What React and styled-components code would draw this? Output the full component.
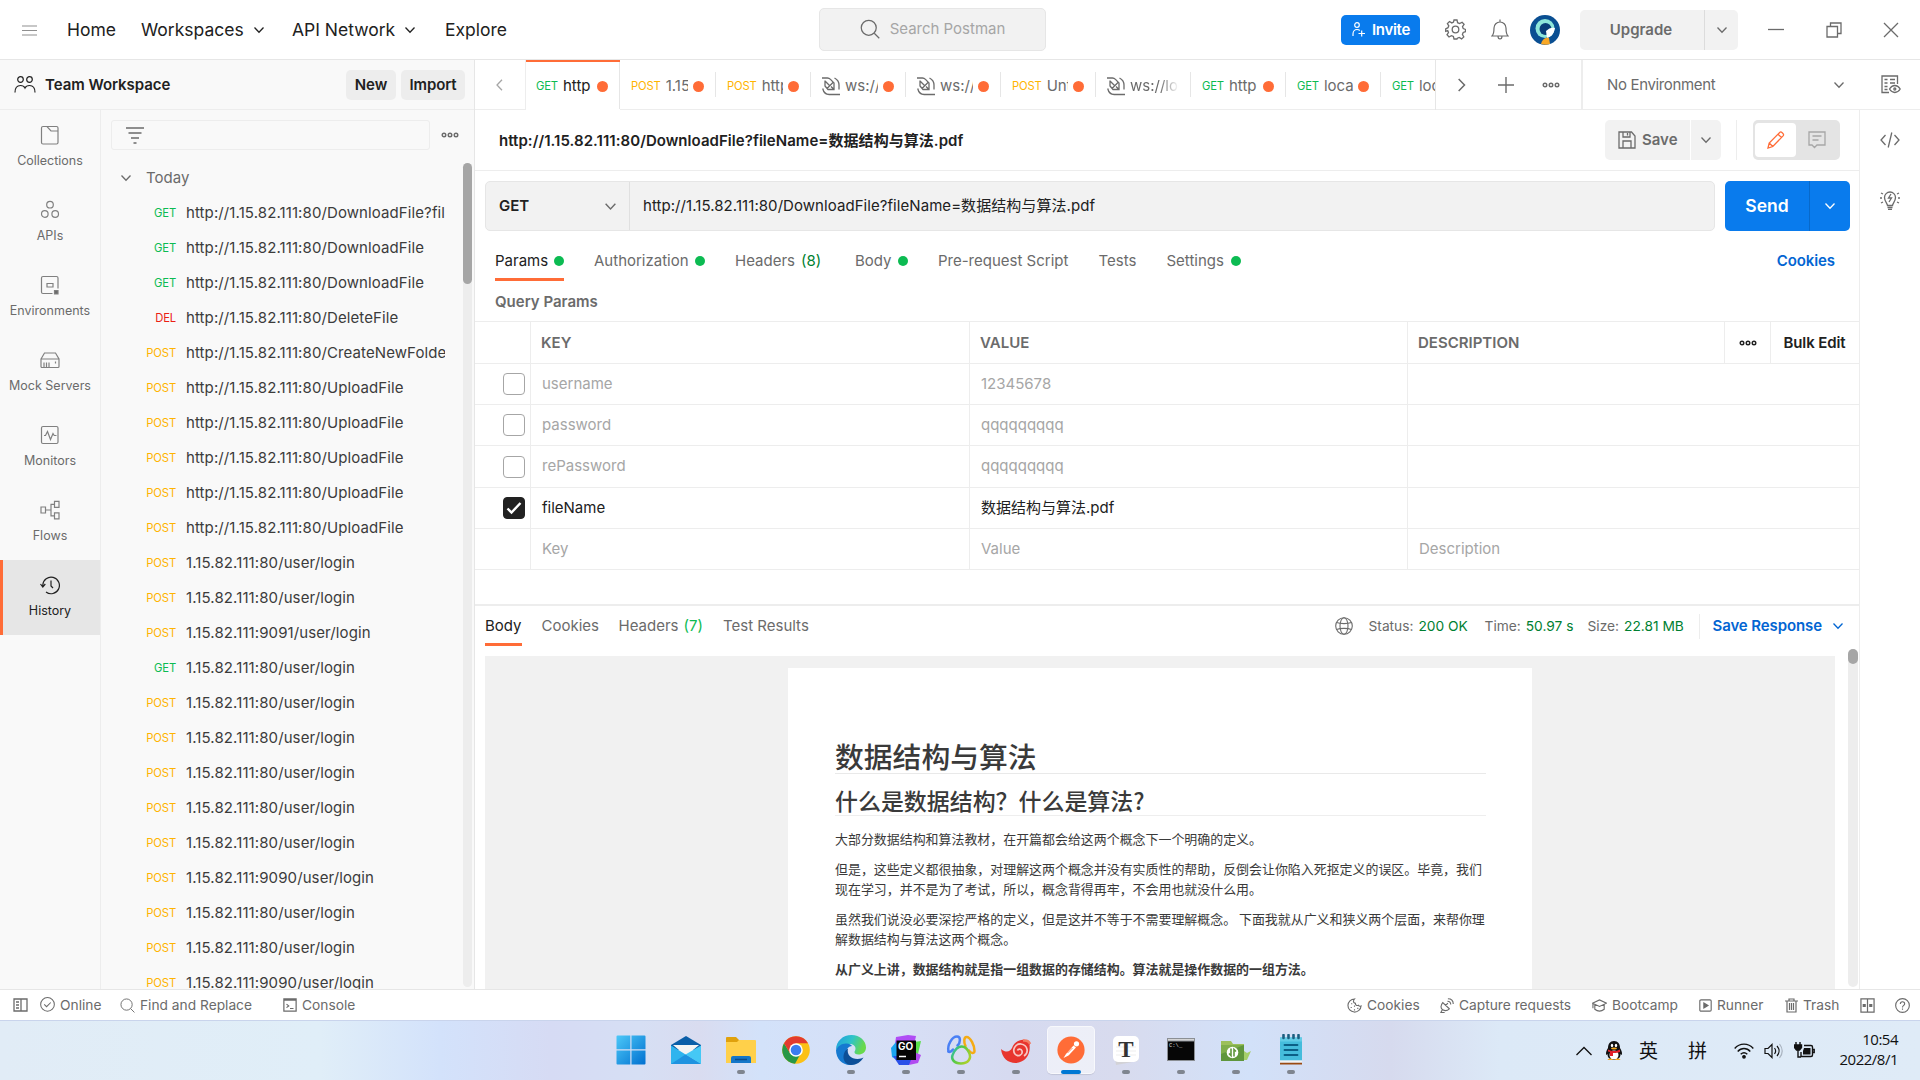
import React from "react";
import styled, { createGlobalStyle, css } from "styled-components";

const C = {
  text: "#212121",
  mid: "#6b6b6b",
  light: "#a6a6a6",
  line: "#ededed",
  panel: "#f9f9f9",
  fill: "#f2f2f2",
  orange: "#ff6c37",
  blue: "#097bed",
  link: "#0265d2",
  green: "#0cbb52",
  darkGreen: "#007f31",
  yellow: "#ffb400",
  red: "#eb2013",
};

const Global = createGlobalStyle`
  * { box-sizing: border-box; }
  html, body { margin: 0; padding: 0; background: #fff; overflow: hidden; }
  body {
    font-family: Inter, "Noto Sans CJK SC", sans-serif;
    font-size: 15px;
    line-height: 20px;
    color: ${C.text};
  }
  svg { display: block; flex: none; }
`;

const Screen = styled.div`
  width: 1920px;
  height: 1080px;
  display: flex;
  flex-direction: column;
  overflow: hidden;
  white-space: nowrap;
`;

const Svg = styled.svg.attrs((p) => ({
  width: p.$w || 16,
  height: p.$h || p.$w || 16,
  viewBox: p.$box || "0 0 16 16",
}))`
  fill: none;
  stroke: ${(p) => p.$c || C.mid};
  stroke-width: ${(p) => p.$s || 1.1};
`;

const Label = styled.span`
  letter-spacing: ${(p) => p.$ls || 0}px;
`;

/* ---------- small icons ---------- */
const Chevron = ({ c, dir = "down", w = 12 }) => {
  const d = {
    down: "M1.5 3.5 6 8.3 10.5 3.5",
    left: "M8 .8 3 6l5 5.2",
    right: "M4 .8 9 6l-5 5.2",
  }[dir];
  return (
    <Svg $w={w} $box="0 0 12 12" $c={c} $s={1.3}>
      <path d={d} />
    </Svg>
  );
};

const Dots = ({ c }) => (
  <Svg $w={18} $h={8} $box="0 0 18 8" $c={c} $s={1.4}>
    <circle cx="3" cy="4" r="1.8" />
    <circle cx="9" cy="4" r="1.8" />
    <circle cx="15" cy="4" r="1.8" />
  </Svg>
);

const SearchIcon = ({ w = 16 }) => (
  <Svg $w={w} $s={1}>
    <circle cx="7" cy="7" r="6" />
    <path d="m11.4 11.4 4 4" />
  </Svg>
);

const SocketIcon = () => (
  <Svg $w={18} $h={19} $box="0 0 18 19" $s={1.3}>
    <path d="M0 1h5.500c1.300 0 2 .4 3 1.400L12 6v6.500H6L3 9V3.500M3 4l4.500 4.500M12 12.500 9 9.500M5 11.500l6-6M12.500 1c3 1.500 4.500 4 4.500 7v4.500M.7 11.500c.8 3.500 3 6 6.500 6H18" />
  </Svg>
);

/* ---------- top bar ---------- */
const TopBar = styled.header`
  height: 60px;
  flex: none;
  display: grid;
  grid-template-columns: 819px 227px 1fr;
  align-items: center;
  border-bottom: 1px solid #e6e6e6;
`;

const NavBar = styled.nav`
  display: flex;
  align-items: center;
  padding-left: 22px;
  font-size: 17.5px;
`;

const MenuSlot = styled.div`
  width: 45px;
`;

const NavItem = styled.div`
  width: ${(p) => p.$w}px;
  display: flex;
  align-items: center;
  gap: 9px;
`;

const SearchBox = styled.div`
  height: 43px;
  display: flex;
  align-items: center;
  justify-content: center;
  gap: 10px;
  padding-bottom: 1px;
  background: ${C.fill};
  border: 1px solid #e6e6e6;
  border-radius: 5px;
  color: ${C.light};
`;

const TopRight = styled.div`
  display: flex;
  align-items: center;
  padding-left: 295px;
`;

const Invite = styled.div`
  width: 79px;
  height: 30px;
  display: flex;
  align-items: center;
  gap: 7px;
  padding-left: 11px;
  background: ${C.blue};
  border-radius: 5px;
  color: #fff;
  font-weight: 600;
  font-size: 15px;
`;

const Slot = styled.div`
  width: ${(p) => p.$w}px;
  display: flex;
  align-items: center;
  justify-content: ${(p) => p.$at || "center"};
`;

const UpgradeGroup = styled.div`
  display: flex;
  height: 40px;
  width: 158px;
  background: ${C.fill};
  border-radius: 5px;
  color: ${C.mid};
  font-weight: 600;
`;

const UpgradeMain = styled.div`
  width: 125px;
  display: flex;
  align-items: center;
  justify-content: center;
  padding-right: 2px;
  border-right: 1px solid #dcdcdc;
`;

const Center = styled.div`
  flex: 1;
  display: flex;
  align-items: center;
  justify-content: center;
`;

/* ---------- body frame ---------- */
const Frame = styled.div`
  height: 929px;
  flex: none;
  display: flex;
`;

const LeftPane = styled.aside`
  width: 475px;
  display: flex;
  flex-direction: column;
  background: ${C.panel};
  border-right: 1px solid #e6e6e6;
`;

const WorkspaceHead = styled.div`
  height: 50px;
  flex: none;
  display: flex;
  align-items: center;
  padding: 0 9px 0 14px;
  border-bottom: 1px solid ${C.line};
  font-weight: 600;
`;

const WorkspaceName = styled.div`
  flex: 1;
  padding-left: 9px;
  letter-spacing: -0.05px;
`;

const SmallButton = styled.div`
  width: ${(p) => p.$w}px;
  height: 30px;
  display: flex;
  align-items: center;
  justify-content: center;
  margin-left: 5px;
  background: ${C.line};
  border-radius: 5px;
  letter-spacing: -0.1px;
`;

const LeftBody = styled.div`
  flex: 1;
  min-height: 0;
  display: flex;
`;

const Rail = styled.div`
  width: 101px;
  border-right: 1px solid ${C.line};
`;

const RailItem = styled.div`
  height: 75px;
  display: flex;
  flex-direction: column;
  align-items: center;
  gap: 8px;
  padding-top: 15px;
  font-size: 12.5px;
  line-height: 16px;
  color: ${C.mid};
  border-left: 3px solid transparent;
  padding-right: 3px;
  ${(p) =>
    p.$active &&
    css`
      background: #e6e6e6;
      border-left-color: ${C.orange};
      color: ${C.text};
    `}
`;

const HistoryPane = styled.div`
  flex: 1;
  min-width: 0;
  display: flex;
  flex-direction: column;
`;

const FilterRow = styled.div`
  height: 50px;
  flex: none;
  display: flex;
  align-items: center;
  gap: 11px;
  padding: 0 0 0 10px;
`;

const FilterInput = styled.div`
  width: 319px;
  height: 30px;
  display: flex;
  align-items: center;
  padding-left: 14px;
  border: 1px solid ${C.line};
  border-radius: 3px;
`;

const ListWrap = styled.div`
  flex: 1;
  min-height: 0;
  display: flex;
  justify-content: space-between;
  padding-right: 2px;
`;

const List = styled.div`
  width: 344px;
  overflow: hidden;
`;

const GroupRow = styled.div`
  height: 35px;
  display: flex;
  align-items: center;
  gap: 14px;
  padding: 1px 0 0 19px;
  color: ${C.mid};
`;

const ListRow = styled.div`
  height: 35px;
  display: flex;
  align-items: center;
  gap: 10px;
  overflow: hidden;
  color: #3c3c3c;
  letter-spacing: 0.1px;
`;

const methodColor = { GET: C.green, POST: C.yellow, DEL: C.red };

const Method = styled.span`
  font-size: 11.25px;
  flex: none;
  letter-spacing: -0.15px;
  color: ${(p) => methodColor[p.$m]};
`;

const ListMethod = styled(Method)`
  width: 75px;
  text-align: right;
`;

const SideTrack = styled.div`
  width: 9px;
  margin: 3px 0 2px;
  background: ${C.line};
  border-radius: 5px;
`;

const SideThumb = styled.div`
  height: ${(p) => p.$h}px;
  background: #a6a6a6;
  border-radius: 5px;
`;

/* ---------- right pane ---------- */
const RightPane = styled.main`
  flex: 1;
  display: flex;
  flex-direction: column;
`;

const TabBar = styled.div`
  height: 50px;
  flex: none;
  display: flex;
`;

const TabBack = styled.div`
  width: 51px;
  display: flex;
  align-items: center;
  justify-content: center;
  border-bottom: 1px solid ${C.line};
  border-right: 1px solid ${C.line};
`;

const TabStrip = styled.div`
  width: 910px;
  display: flex;
  overflow: hidden;
  border-right: 1px solid #e6e6e6;
`;

const Tab = styled.div`
  width: ${(p) => p.$w || 95}px;
  flex: none;
  display: flex;
  align-items: center;
  color: ${C.mid};
  border-bottom: 1px solid ${(p) => (p.$active ? "transparent" : C.line)};
  ${(p) =>
    p.$active &&
    css`
      color: ${C.text};
      border-top: 2px solid ${C.orange};
    `}
`;

const TabInner = styled.div`
  flex: 1;
  min-width: 0;
  display: flex;
  align-items: center;
  gap: 5px;
  padding: ${(p) => (p.$active ? "1px 11px 0 10px" : "3px 11px 0 11px")};
`;

const TabName = styled.div`
  flex: 1;
  min-width: 0;
  overflow: hidden;
  ${(p) =>
    p.$fade &&
    css`
      mask-image: linear-gradient(90deg, #000 60%, transparent 100%);
    `}
`;

const TabDivider = styled.div`
  width: 1px;
  height: ${(p) => (p.$full ? "100%" : "25px")};
  background: #e6e6e6;
`;

const Dot = styled.span`
  width: ${(p) => p.$d || 10}px;
  height: ${(p) => p.$d || 10}px;
  flex: none;
  border-radius: 50%;
  background: ${(p) => p.$c || C.green};
`;

const TabActions = styled.div`
  width: 147px;
  display: flex;
  align-items: center;
  padding: 0 8px 0 3px;
  border-bottom: 1px solid ${C.line};
  border-right: 2px solid ${C.line};
`;

const EnvPicker = styled.div`
  flex: 1;
  display: flex;
  align-items: center;
  justify-content: space-between;
  padding: 0 19px 0 24px;
  color: ${C.mid};
  border-bottom: 1px solid ${C.line};
`;

const EnvRight = styled.div`
  display: flex;
  align-items: center;
  gap: 36px;
`;

const Work = styled.div`
  flex: 1;
  min-height: 0;
  display: flex;
`;

const Builder = styled.div`
  width: 1384px;
  display: flex;
  flex-direction: column;
`;

const ToolStrip = styled.div`
  flex: 1;
  display: flex;
  flex-direction: column;
  align-items: center;
  gap: 40px;
  padding-top: 20px;
  border-left: 1px solid ${C.line};
`;

const TitleBar = styled.div`
  height: 61px;
  flex: none;
  display: flex;
  align-items: center;
  padding: 0 19px 0 24px;
  border-bottom: 1px solid ${C.line};
`;

const Title = styled.div`
  flex: 1;
  padding-top: 1px;
  font-weight: 600;
  letter-spacing: 0.05px;
`;

const SaveMain = styled.div`
  width: 85px;
  height: 40px;
  display: flex;
  align-items: center;
  gap: 6px;
  padding-left: 13px;
  background: ${C.fill};
  border-radius: 5px 0 0 5px;
  color: ${C.mid};
  font-weight: 600;
`;

const SaveMore = styled.div`
  width: 30px;
  height: 40px;
  display: flex;
  align-items: center;
  justify-content: center;
  margin-left: 1px;
  background: ${C.fill};
  border-radius: 0 5px 5px 0;
`;

const VLine = styled.div`
  width: 1px;
  height: ${(p) => p.$h}px;
  margin: 0 ${(p) => p.$r}px 0 ${(p) => p.$l}px;
  background: ${C.line};
`;

const Toggle = styled.div`
  width: 87px;
  height: 40px;
  display: flex;
  padding: 3px 3px 3px 2px;
  background: #e4e4e4;
  border-radius: 5px;
`;

const ToggleHalf = styled.div`
  width: 41px;
  display: flex;
  align-items: center;
  justify-content: center;
  border-radius: 4px;
  background: ${(p) => (p.$on ? "#fff" : "transparent")};
`;

const UrlRow = styled.div`
  height: 60px;
  flex: none;
  display: flex;
  gap: 10px;
  padding: 10px 9px 0 10px;
`;

const UrlBox = styled.div`
  width: 1230px;
  display: flex;
  background: ${C.fill};
  border: 1px solid #e6e6e6;
  border-radius: 5px;
`;

const MethodPick = styled.div`
  width: 144px;
  display: flex;
  align-items: center;
  justify-content: space-between;
  padding: 0 12px 0 13px;
  font-weight: 600;
  border-right: 1px solid #e0e0e0;
`;

const UrlText = styled.div`
  display: flex;
  align-items: center;
  padding-left: 13px;
  letter-spacing: 0.06px;
`;

const SendGroup = styled.div`
  flex: 1;
  display: flex;
  background: ${C.blue};
  border-radius: 5px;
  color: #fff;
  font-weight: 600;
  font-size: 17.5px;
`;

const SendMain = styled.div`
  width: 85px;
  display: flex;
  align-items: center;
  justify-content: center;
  border-right: 1px solid #0769cb;
`;

const SubTabs = styled.div`
  height: ${(p) => p.$h}px;
  flex: none;
  display: flex;
  padding-left: ${(p) => p.$l}px;
  padding-right: ${(p) => p.$r}px;
  padding-top: ${(p) => p.$t || 0}px;
  color: ${C.mid};
`;

const SubSlot = styled.div`
  width: ${(p) => p.$w}px;
  display: flex;
`;

const SubTab = styled.div`
  display: flex;
  align-items: center;
  gap: ${(p) => p.$gap || 6}px;
  padding-top: 2px;
  border-bottom: 3px solid transparent;
  ${(p) =>
    p.$active &&
    css`
      color: ${C.text};
      border-bottom-color: ${C.orange};
    `}
`;

const Count = styled.span`
  color: ${(p) => p.$c || C.darkGreen};
`;

const Spacer = styled.div`
  flex: 1;
`;

const Link = styled.div`
  display: flex;
  align-items: center;
  gap: 10px;
  color: ${C.link};
  font-weight: 600;
  letter-spacing: -0.1px;
`;

const SectionTitle = styled.div`
  height: 40px;
  flex: none;
  display: flex;
  align-items: center;
  padding: 2px 0 0 20px;
  color: ${C.mid};
  font-weight: 600;
`;

const Table = styled.div`
  height: 283px;
  flex: none;
  border-top: 1px solid ${C.line};
`;

const Row = styled.div`
  height: ${(p) => p.$h}px;
  display: grid;
  grid-template-columns: ${(p) =>
    p.$head ? "56px 439px 438px 317px 46px 1fr" : "56px 439px 438px 1fr"};
  border-bottom: 1px solid ${C.line};
`;

const Cell = styled.div`
  display: flex;
  align-items: center;
  padding-left: ${(p) => (p.$head ? 10 : 11)}px;
  padding-bottom: ${(p) => (p.$head ? 0 : 1)}px;
  border-right: 1px solid ${(p) => (p.$last ? "transparent" : C.line)};
  color: ${(p) => p.$c || C.light};
  font-weight: ${(p) => (p.$head ? 600 : 400)};
`;

const CheckCell = styled(Cell)`
  justify-content: flex-end;
  padding: 0 5px 0 0;
`;

const DotsCell = styled(Cell)`
  justify-content: center;
  padding: 0;
`;

const Check = styled.div`
  width: 22px;
  height: 22px;
  display: flex;
  align-items: center;
  justify-content: center;
  border: 1px solid ${(p) => (p.$on ? C.text : C.light)};
  border-radius: 4px;
  background: ${(p) => (p.$on ? C.text : "#fff")};
`;

const Response = styled.section`
  flex: 1;
  min-height: 0;
  display: flex;
  flex-direction: column;
  border-top: 2px solid ${C.line};
`;

const Meta = styled.div`
  width: ${(p) => p.$w}px;
  display: flex;
  align-items: center;
  gap: 5px;
  font-size: 13.75px;
`;

const Viewer = styled.div`
  flex: 1;
  min-height: 0;
  display: flex;
  justify-content: space-between;
  padding: 3px 1px 0 10px;
`;

const Canvas = styled.div`
  width: 1350px;
  display: flex;
  padding-left: 303px;
  margin-top: 7px;
  overflow: hidden;
  background: #f1f1f1;
`;

const Page = styled.article`
  width: 744px;
  height: 900px;
  margin-top: 12px;
  padding: 68px 46px 0 47px;
  background: #fff;
  color: #3a3a3a;
  font-family: "Noto Sans CJK SC", sans-serif;
  white-space: normal;
`;

const H1 = styled.h1`
  margin: 0;
  height: 38px;
  font-size: 28.8px;
  line-height: 40px;
  font-weight: 500;
  border-bottom: 1px solid #e9e9e9;
`;

const H2 = styled.h2`
  margin: 10px 0 13px;
  height: 32px;
  font-size: 22.95px;
  line-height: 32px;
  font-weight: 500;
  border-bottom: 1px solid #eeeeee;
`;

const P = styled.p`
  margin: 0 0 10px;
  width: 660px;
  font-size: 12.95px;
  line-height: 20px;
  white-space: pre-line;
  font-weight: ${(p) => (p.$b ? 700 : 400)};
`;

const RespTrack = styled.div`
  width: 10px;
  margin-bottom: 2px;
  background: ${C.line};
  border-radius: 5px;
`;

/* ---------- status bar ---------- */
const StatusBar = styled.footer`
  height: 31px;
  flex: none;
  display: flex;
  align-items: center;
  padding-left: 13px;
  border-top: 1px solid #e6e6e6;
  background: #fff;
  color: ${C.mid};
  font-size: 13.75px;
`;

const StatusItem = styled.div`
  width: ${(p) => p.$w}px;
  display: flex;
  align-items: center;
  gap: 5px;
`;

/* ---------- taskbar ---------- */
const TaskBar = styled.div`
  height: 60px;
  flex: none;
  display: flex;
  border-top: 1px solid #c9d4ec;
  padding-left: 603px;
  background: linear-gradient(
    90deg,
    #e1ecf6 0,
    #e0eef8 320px,
    #d3e2fb 440px,
    #d6dbf4 550px,
    #d6dff4 640px,
    #d9dcf0 700px,
    #d3e2fa 760px,
    #d7dff6 900px,
    #d6daf0 1010px,
    #d8dbee 1120px,
    #d2e1f9 1250px,
    #d6daee 1390px,
    #dce9f7 1500px,
    #dfebf7 1920px
  );
`;

const Apps = styled.div`
  display: grid;
  grid-template-columns: repeat(13, 55.08px);
  justify-items: center;
  width: 716px;
  padding-top: 5px;
`;

const AppTile = styled.div`
  width: 48px;
  height: 48px;
  display: flex;
  flex-direction: column;
  align-items: center;
  gap: 4px;
  padding-top: 8px;
  border-radius: 5px;
  ${(p) =>
    p.$on &&
    css`
      background: rgba(255, 255, 255, 0.55);
      box-shadow: inset 0 0 0 1px rgba(255, 255, 255, 0.6), 0 1px 1px rgba(0, 0, 0, 0.1);
    `}
`;

const Mark = styled.div`
  width: ${(p) => (p.$on ? 20 : 8)}px;
  height: 4px;
  border-radius: 2px;
  background: ${(p) => (p.$on ? "#0078d4" : "#7f858f")};
`;

const Tray = styled.div`
  flex: 1;
  display: flex;
  align-items: center;
  padding-left: 257px;
  font-family: "Open Sans", "Noto Sans CJK SC", sans-serif;
  color: #111;
`;

const Ime = styled.div`
  width: ${(p) => p.$w}px;
  font-size: 19px;
`;

const Clock = styled.div`
  flex: 1;
  padding: 0 22px 4px 0;
  text-align: right;
  font-size: 15px;
  line-height: 20px;
  letter-spacing: -0.5px;
`;

/* ---------- rail icons ---------- */
const railIcons = {
  Collections: (
    <path d="M2.500 1h4l4 4.500h7V17a1.500 1.500 0 0 1-1.500 1.500H2.500A1.500 1.500 0 0 1 1 17V2.500A1.500 1.500 0 0 1 2.500 1ZM6.500 1H16a1.500 1.500 0 0 1 1.500 1.500v3" />
  ),
  APIs: (
    <>
      <circle cx="9.500" cy="4.200" r="3.300" />
      <circle cx="4.300" cy="13.500" r="3.300" />
      <circle cx="14.700" cy="13.500" r="3.300" />
    </>
  ),
  Environments: (
    <>
      <path d="M12 18H2.500A1.500 1.500 0 0 1 1 16.500v-14A1.500 1.500 0 0 1 2.500 1h13.500a1.500 1.500 0 0 1 1.500 1.500V13M6.500 8h6v3.500h-6z" />
      <path d="M14 15h3.500v3.500H14z" fill={C.mid} />
    </>
  ),
  "Mock Servers": (
    <path d="M.5 8.500 4 2.500h11l3.500 6v7.500a1 1 0 0 1-1 1h-16a1 1 0 0 1-1-1ZM.5 8.500h18M3.500 12v5M6 12v5M8.500 12v5M15 11v2" />
  ),
  Monitors: (
    <path d="M2.500 1h13.500a1.500 1.500 0 0 1 1.500 1.500v14a1.500 1.500 0 0 1-1.500 1.500h-13.500A1.500 1.500 0 0 1 1 16.500v-14A1.500 1.500 0 0 1 2.500 1ZM3.500 10H5l2-4 3 8 2.500-6 1.200 2H16" />
  ),
  Flows: (
    <path d="M.5 6.500h4.500v6H.5zM14 .8h4.500v6H14zM14 12.300h4.500v6H14zM5 9.500h5.500M14 3.800h-3.500v11.500H14" />
  ),
  History: (
    <path d="M5.500 16.500A8.300 8.300 0 1 0 2.300 9.500v2M0 8.500l2.300 3 2.500-3M10.500 5v5.500l2 2" />
  ),
};

const rows = [
  ["GET", "http://1.15.82.111:80/DownloadFile?fil"],
  ["GET", "http://1.15.82.111:80/DownloadFile"],
  ["GET", "http://1.15.82.111:80/DownloadFile"],
  ["DEL", "http://1.15.82.111:80/DeleteFile"],
  ["POST", "http://1.15.82.111:80/CreateNewFolde"],
  ...Array(5).fill(["POST", "http://1.15.82.111:80/UploadFile"]),
  ["POST", "1.15.82.111:80/user/login"],
  ["POST", "1.15.82.111:80/user/login"],
  ["POST", "1.15.82.111:9091/user/login"],
  ["GET", "1.15.82.111:80/user/login"],
  ...Array(5).fill(["POST", "1.15.82.111:80/user/login"]),
  ["POST", "1.15.82.111:9090/user/login"],
  ["POST", "1.15.82.111:80/user/login"],
  ["POST", "1.15.82.111:80/user/login"],
  ["POST", "1.15.82.111:9090/user/login"],
];

const tabs = [
  { m: "GET", n: "http", dot: true, active: true, w: 94 },
  { m: "POST", n: "1.15.", dot: true, w: 96 },
  { m: "POST", n: "http", dot: true },
  { ws: true, n: "ws://l", dot: true },
  { ws: true, n: "ws://l", dot: true },
  { m: "POST", n: "Unti", dot: true },
  { ws: true, n: "ws://loc", fade: true },
  { m: "GET", n: "http", dot: true },
  { m: "GET", n: "loca", dot: true },
  { m: "GET", n: "loca", dot: true },
];

const subTabs = [
  { n: "Params", w: 99, dot: true, active: true },
  { n: "Authorization", w: 141, dot: true },
  { n: "Headers", count: "(8)", w: 120 },
  { n: "Body", w: 83, dot: true },
  { n: "Pre-request Script", w: 160.5 },
  { n: "Tests", w: 68 },
  { n: "Settings", w: 90, dot: true, gap: 7 },
];

const params = [
  { k: "username", v: "12345678", h: 41 },
  { k: "password", v: "qqqqqqqqq", h: 41 },
  { k: "rePassword", v: "qqqqqqqqq", h: 42 },
  { k: "fileName", v: "数据结构与算法.pdf", h: 41, on: true },
];

const TaskSvg = ({ children }) => (
  <svg width="32" height="32" viewBox="0 0 32 32">
    {children}
  </svg>
);

const apps = [
  {
    icon: (
      <>
        <defs>
          <linearGradient id="win" x1="0" y1="0" x2="1" y2="1">
            <stop offset="0" stopColor="#4cc8f8" />
            <stop offset="1" stopColor="#0070d0" />
          </linearGradient>
        </defs>
        <path
          fill="url(#win)"
          d="M2.500 1.500h12.800v13.800H1.500V2.500a1 1 0 0 1 1-1ZM16.500 1.500h13a1 1 0 0 1 1 1v12.800h-14zM1.500 16.500h13.800v14H2.500a1 1 0 0 1-1-1zM16.500 16.500h14v13a1 1 0 0 1-1 1h-13z"
        />
      </>
    ),
  },
  {
    icon: (
      <>
        <path d="M1 11 16 2l15 9v5H1z" fill="#0a5ea8" />
        <path d="M3 11h26L16 22z" fill="#f4f4f4" />
        <path d="M1 11.500 31 30H1z" fill="#2fb4ee" />
        <path d="M31 11.500V30L15.500 20.500z" fill="#45c8f5" />
        <path d="M1 30 15.500 20.500 31 30z" fill="#1f93e0" />
      </>
    ),
  },
  {
    mark: true,
    icon: (
      <>
        <path d="M1 4a1 1 0 0 1 1-1h9l3 3v6H1z" fill="#e0a10c" />
        <path d="M1 8h11l2-2h16a1 1 0 0 1 1 1v22H1z" fill="#ffd04a" />
        <path d="M6 29v-5a2 2 0 0 1 2-2h16a2 2 0 0 1 2 2v5z" fill="#1477c9" />
        <path d="M10 25.500h12" stroke="#0a4c8b" strokeWidth="1.500" />
      </>
    ),
  },
  {
    icon: (
      <>
        <circle cx="16" cy="16" r="13.800" fill="#fbc116" />
        <path d="M4 9.200A13.800 13.800 0 0 0 15 29.800L21 19 16 16 10 19z" fill="#279847" />
        <path d="M4 9.200A13.800 13.800 0 0 1 28 9.200H16L10 19z" fill="#e33b2e" />
        <circle cx="16" cy="16" r="6.800" fill="#fff" />
        <circle cx="16" cy="16" r="5.300" fill="#3a7df0" />
      </>
    ),
  },
  {
    mark: true,
    icon: (
      <>
        <defs>
          <linearGradient id="edgeTop" x1="0" y1="0" x2="1" y2=".3">
            <stop offset="0" stopColor="#1f9de0" />
            <stop offset=".55" stopColor="#2fc3c8" />
            <stop offset="1" stopColor="#69d94c" />
          </linearGradient>
        </defs>
        <path d="M1 16C1 7 8 1 16.500 1 25 1 31 7 31 13.500c0 4.500-3.500 7-7.500 7-3 0-4-1.200-4-2.500 0-1 1-1.500 1-3.500 0-2.500-2.500-4.500-6-4.500C8 10 4 12 1 16Z" fill="url(#edgeTop)" />
        <path d="M1 16c2-4 6-7 11-6.500 2 .2 4 1.200 5 2.500-3 0-6 3-6 7 0 6 6 11 12 9-2 2-5 3-8 3C7 31 1 24.500 1 16Z" fill="#1579d0" />
        <path d="M13 14.500c-1.500 6 3 10.500 9.500 10.500 3 0 4.500-.8 6-1.500C26 28 21.500 31 16 31c-5 0-8-4.500-7.500-9 .2-3.300 2-6 4.500-7.500Z" fill="#0c4f98" />
      </>
    ),
  },
  {
    mark: true,
    icon: (
      <>
        <path d="M6 3 18 1l8 1-3 14H4z" fill="#b04df5" />
        <path d="M24 8l7-1-3 13h-4z" fill="#5ae04a" />
        <path d="M1 14l5-6 4 20-8-5z" fill="#19a5f0" />
        <path d="M3 22h24l-8 9H9z" fill="#2a50e8" />
        <path d="M24 18l7 3-3 8-9 2z" fill="#b14cf0" />
        <path d="M6.500 6.500h19.500v19.500H6.500z" fill="#050505" />
        <text x="8" y="16" fontFamily="Inter" fontWeight="700" fontSize="10" fill="#fff">GO</text>
        <path d="M9 22.500h7" stroke="#fff" strokeWidth="1.500" />
      </>
    ),
  },
  {
    mark: true,
    icon: (
      <>
        <defs>
          <linearGradient id="ring" x1="0" y1="0" x2="1" y2=".6">
            <stop offset="0" stopColor="#28b6d6" />
            <stop offset=".4" stopColor="#4cc94c" />
            <stop offset="1" stopColor="#a8d02a" />
          </linearGradient>
        </defs>
        <g fill="none" strokeWidth="2.500" strokeLinecap="round">
          <path d="M3.500 17.500C2 11 7 2.500 12 2.500c4 0 3.500 6 .5 9" stroke="#4a80f5" />
          <path d="M8 15.500c-1.500 2-3.500 3-4.500 2" stroke="#4a80f5" />
          <path d="M20.500 12c-2-4-1.500-9 1-9 4 0 8 8.500 8 14 0 3-4 2.500-5.500-.5" stroke="#f5ab14" />
          <path d="M16.500 12.500c4.500 0 6 3 7.500 6 3 6-1 11-8 11S5.500 25 8 20c1.800-4 4-7.500 8.500-7.500Z" stroke="url(#ring)" />
        </g>
      </>
    ),
  },
  {
    mark: true,
    icon: (
      <>
        <path d="M1 15c5 4 9 3 11-1 2-6 8-9 13-8 4 .500 6 3 4.500 5 1.500 10-5 18-14 18C8 29 2 24 1 15Z" fill="#e8352e" />
        <path d="M24 22c5-3 4-11-3-12-6-.5-9 6-6 10 3 3.500 8 1 7-3-.700-2.500-4-2.500-4.500-.5" fill="none" stroke="#f7c9c4" strokeWidth="1.700" />
        <path d="M23 6.500c4-.5 6 .5 7 3.500" fill="none" stroke="#f37b62" strokeWidth="2.500" />
      </>
    ),
  },
  {
    mark: true,
    on: true,
    icon: (
      <>
        <circle cx="16" cy="16" r="13.600" fill="#ff6c37" />
        <path d="m8.500 24 2.500-4 7.500-8.500 2.500 2-7.500 8zM12 18.500l3 2" fill="#fff" />
        <circle cx="21.500" cy="9.800" r="2.600" fill="#fff" />
        <path d="m12.500 19 5-5" stroke="#ff6c37" strokeWidth=".8" />
      </>
    ),
  },
  {
    mark: true,
    icon: (
      <>
        <path d="M3 8 27 3l1 24-22 4z" fill="#d2d2d6" />
        <rect x="3" y="2" width="26" height="26" rx="5" fill="#fff" />
        <path d="M6 13h20M6 17h20M6 21h20" stroke="#e9e9e9" strokeWidth=".8" />
        <text x="16" y="23" textAnchor="middle" fontFamily="Liberation Serif" fontWeight="700" fontSize="23" fill="#333">T</text>
      </>
    ),
  },
  {
    mark: true,
    icon: (
      <>
        <rect x="2" y="4" width="28" height="23" fill="#8b8f94" />
        <rect x="3" y="7.500" width="26" height="18.500" fill="#060606" />
        <path d="M3 5.800h26" stroke="#d8d8d8" strokeWidth="1.500" />
        <text x="4" y="12.500" fontFamily="Liberation Mono" fontSize="5.500" fill="#ddd">C:\_</text>
      </>
    ),
  },
  {
    mark: true,
    icon: (
      <>
        <path d="M1 7h10l2 3h11v17H1z" fill="#9cc05a" />
        <path d="M1 11h23v16H1z" fill="#5f963c" />
        <path d="M1 11h23L1 20z" fill="#7fae4a" />
        <path d="m24 17 3 2 4-2-4 9h-3z" fill="#a5cf6a" />
        <circle cx="12.500" cy="18.500" r="5.800" fill="#fff" />
        <path d="M11 14.500v7l-2-2M14 22.500v-7l2 2" stroke="#5f963c" strokeWidth="1.600" fill="none" />
      </>
    ),
  },
  {
    mark: true,
    icon: (
      <>
        <path d="M5 28.500h22v2H5z" fill="#9a4a12" />
        <path d="M5 3.500h22V26.500H5z" fill="#45bcdc" />
        <path d="M5 3.500h22v4H5z" fill="#62cce6" />
        <path d="M5 26.500h22v2H5z" fill="#f2f2f2" />
        <path d="M9.500 11h13M9.500 16h13M9.500 21h13" stroke="#0b5f86" strokeWidth="1.800" strokeLinecap="round" />
        <path d="M8.500 1v3M13.500 1v3M18.500 1v3M23.500 1v3" stroke="#1b5f80" strokeWidth="2.600" strokeLinecap="round" />
      </>
    ),
  },
];

function TopSection() {
  return (
    <TopBar>
      <NavBar>
        <MenuSlot>
          <Svg $w={15} $h={12} $box="0 0 15 12" $c="#8f8f8f">
            <path d="M0 2h15M0 6.500h15M0 11h15" />
          </Svg>
        </MenuSlot>
        <NavItem $w={74}>Home</NavItem>
        <NavItem $w={151}>
          Workspaces <Chevron c={C.text} />
        </NavItem>
        <NavItem $w={153}>
          API Network <Chevron c={C.text} />
        </NavItem>
        <NavItem $w={80}>Explore</NavItem>
      </NavBar>
      <SearchBox>
        <SearchIcon w={20} />
        Search Postman
      </SearchBox>
      <TopRight>
        <Invite>
          <Svg $w={13} $h={15} $box="0 0 13 15" $c="#fff" $s={1.2}>
            <circle cx="5" cy="3" r="2.300" />
            <path d="M1 14v-2c0-3 2-4.500 4-4.500 1 0 2 .3 2.800 1M6.500 11.500H13M9.700 8.500v6" />
          </Svg>
          <Label $ls={-0.3}>Invite</Label>
        </Invite>
        <Slot $w={70}>
          <Svg $w={21} $box="0 0 21 21" $s={1.3}>
            <path d="m9 1h3l.6 2.700 2 .9 2.500-1.400 2 2.200-1.600 2.300.7 1.800 2.300.9v2.300l-2.300.8-.8 2 1.400 2.400-2.200 2-2.400-1.500-1.800.8L12 20H9l-.6-2.500-2-.8-2.400 1.300-2-2.200 1.500-2.300-.8-2L.7 12.300V9.800L3 8.700l.8-1.900-1.400-2.300 2.100-2 2.300 1.400 1.700-.8Z" />
            <circle cx="10.500" cy="10.500" r="3.300" />
          </Svg>
        </Slot>
        <Slot $w={20}>
          <Svg $w={18} $h={21} $box="0 0 18 21" $s={1.2}>
            <path d="M1 17c2-2 2-4 2-8a6 6 0 0 1 12 0c0 4 0 6 2 8ZM7 17c0 4 4 4 4 0M9 3V.5" />
          </Svg>
        </Slot>
        <Slot $w={70}>
          <Svg $w={30} $box="0 0 30 30" stroke="none" $s={0.01}>
            <circle cx="15" cy="15" r="15" fill="#0a4f92" />
            <circle cx="15" cy="13.500" r="9.500" fill="#8ee6da" />
            <circle cx="15.500" cy="14" r="6" fill="#0a3d78" />
            <path d="M16 16c3-3 6-4 9-3-1 6-4 9-8 10z" fill="#fff" />
            <path d="M11 29c1-4 4-7 8-6l1 6a15 15 0 0 1-9 0Z" fill="#f9a825" />
          </Svg>
        </Slot>
        <UpgradeGroup>
          <UpgradeMain>Upgrade</UpgradeMain>
          <Center>
            <Chevron />
          </Center>
        </UpgradeGroup>
        <Slot $w={75}>
          <Svg $w={16} $s={1.3}>
            <path d="M0 7.500h16" />
          </Svg>
        </Slot>
        <Slot $w={42}>
          <Svg $w={16} $s={1.3}>
            <path d="M1 4.500h10.500V15H1zM4.500 4.500V1H15v10.500h-3.500" />
          </Svg>
        </Slot>
        <Slot $w={72}>
          <Svg $w={16} $s={1.3}>
            <path d="m1 1 14 14M15 1 1 15" />
          </Svg>
        </Slot>
      </TopRight>
    </TopBar>
  );
}

function Sidebar() {
  return (
    <LeftPane>
      <WorkspaceHead>
        <Svg $w={22} $h={17} $box="0 0 22 17" $c={C.text} $s={1.2}>
          <circle cx="6.500" cy="3.500" r="2.800" />
          <circle cx="15.500" cy="3.500" r="2.800" />
          <path d="M1 16.500c0-4.500 2-7 5.500-7 2.500 0 3.800 1 4.500 2.500.7-1.500 2-2.500 4.500-2.500 3.500 0 5.500 2.500 5.500 7" />
        </Svg>
        <WorkspaceName>Team Workspace</WorkspaceName>
        <SmallButton $w={50}>New</SmallButton>
        <SmallButton $w={64}>Import</SmallButton>
      </WorkspaceHead>
      <LeftBody>
        <Rail>
          {Object.keys(railIcons).map((name) => (
            <RailItem key={name} $active={name === "History"}>
              <Svg
                $w={20}
                $box="-.5 -.5 20 20"
                $c={name === "History" ? C.text : "#808080"}
                $s={1.2}
              >
                {railIcons[name]}
              </Svg>
              {name}
            </RailItem>
          ))}
        </Rail>
        <HistoryPane>
          <FilterRow>
            <FilterInput>
              <Svg $w={18} $h={17} $box="0 0 18 17" $s={1.4}>
                <path d="M0 1h18M2.500 6h13M5 11h8M7.500 16h3" />
              </Svg>
            </FilterInput>
            <Dots />
          </FilterRow>
          <ListWrap>
            <List>
              <GroupRow>
                <Chevron />
                Today
              </GroupRow>
              {rows.map(([m, url], i) => (
                <ListRow key={i}>
                  <ListMethod $m={m}>{m}</ListMethod>
                  {url}
                </ListRow>
              ))}
            </List>
            <SideTrack>
              <SideThumb $h={121} />
            </SideTrack>
          </ListWrap>
        </HistoryPane>
      </LeftBody>
    </LeftPane>
  );
}

function Tabs() {
  return (
    <TabBar>
      <TabBack>
        <Chevron dir="left" c={C.light} />
      </TabBack>
      <TabStrip>
        {tabs.map((t, i) => (
          <Tab key={i} $active={t.active} $w={t.w}>
            <TabInner $active={t.active}>
              {t.ws ? <SocketIcon /> : <Method $m={t.m}>{t.m}</Method>}
              <TabName $fade={t.fade}>{t.n}</TabName>
              {t.dot && <Dot $c={C.orange} $d={11} />}
            </TabInner>
            <TabDivider $full={t.active} />
          </Tab>
        ))}
      </TabStrip>
      <TabActions>
        <Slot $w={45}>
          <Chevron dir="right" w={14} />
        </Slot>
        <Slot $w={45}>
          <Svg $w={16} $s={1.4}>
            <path d="M8 0v16M0 8h16" />
          </Svg>
        </Slot>
        <Slot $w={45}>
          <Dots />
        </Slot>
      </TabActions>
      <EnvPicker>
        <Label $ls={-0.35}>No Environment</Label>
        <EnvRight>
          <Chevron />
          <Svg $w={20} $h={19} $box="0 0 20 19" $s={1.3}>
            <path d="M8 17.500H1V1h15.500v8M3.500 4.500h3M9 4.500h5M3.500 8h3M9 8h5M3.500 11.500h3M3.500 14.500h3" />
            <path d="M8.500 14c1.500-2.500 3-3.500 5.300-3.500S17.700 11.500 19.200 14c-1.500 2.500-3 3.500-5.400 3.500S10 16.500 8.500 14Z" />
            <circle cx="13.800" cy="14" r="1" />
          </Svg>
        </EnvRight>
      </EnvPicker>
    </TabBar>
  );
}

function Request() {
  return (
    <>
      <TitleBar>
        <Title>http://1.15.82.111:80/DownloadFile?fileName=数据结构与算法.pdf</Title>
        <SaveMain>
          <Svg $w={18} $h={18} $box="0 0 18 18" $s={1.3}>
            <path d="M1 1h12.500L17 5v12H1zM5 1v5h7V1M9.500 2v2.500M5 17v-7h8v7" />
          </Svg>
          Save
        </SaveMain>
        <SaveMore>
          <Chevron />
        </SaveMore>
        <VLine $h={40} $l={15} $r={16} />
        <Toggle>
          <ToggleHalf $on>
            <Svg $w={18} $h={18} $box="0 0 18 18" $c={C.orange} $s={1.3}>
              <path d="M1 17l1.200-5L13 1.200c1-1 4.500 2 3.300 3.400L5.800 15.500ZM2.200 12l3.600 3.500M11 3.200l3.700 3.600" />
            </Svg>
          </ToggleHalf>
          <ToggleHalf>
            <Svg $w={18} $h={18} $box="0 0 18 18" $c={C.light} $s={1.3}>
              <path d="M1 1h16v13H9l-2.500 2.500L4 14H1zM4.500 5h9M4.500 9h6" />
            </Svg>
          </ToggleHalf>
        </Toggle>
      </TitleBar>
      <UrlRow>
        <UrlBox>
          <MethodPick>
            GET <Chevron w={13} />
          </MethodPick>
          <UrlText>http://1.15.82.111:80/DownloadFile?fileName=数据结构与算法.pdf</UrlText>
        </UrlBox>
        <SendGroup>
          <SendMain>Send</SendMain>
          <Center>
            <Chevron c="#fff" />
          </Center>
        </SendGroup>
      </UrlRow>
      <SubTabs $h={50} $l={20} $r={24} $t={10}>
        {subTabs.map((t) => (
          <SubSlot key={t.n} $w={t.w}>
            <SubTab $active={t.active} $gap={t.gap}>
              {t.n}
              {t.count && <Count>{t.count}</Count>}
              {t.dot && <Dot />}
            </SubTab>
          </SubSlot>
        ))}
        <Spacer />
        <Link>Cookies</Link>
      </SubTabs>
      <SectionTitle>Query Params</SectionTitle>
      <Table>
        <Row $h={42} $head>
          <CheckCell />
          <Cell $head $c={C.mid}>KEY</Cell>
          <Cell $head $c={C.mid}>VALUE</Cell>
          <Cell $head $c={C.mid}>DESCRIPTION</Cell>
          <DotsCell>
            <Dots c={C.text} />
          </DotsCell>
          <DotsCell $head $last $c={C.text}>
            <Label $ls={-0.1}>Bulk Edit</Label>
          </DotsCell>
        </Row>
        {params.map((p) => (
          <Row key={p.k} $h={p.h}>
            <CheckCell>
              <Check $on={p.on}>
                {p.on && (
                  <Svg $w={16} $c="#fff" $s={2.4}>
                    <path d="m1.500 8.500 4 4L14.500 3" />
                  </Svg>
                )}
              </Check>
            </CheckCell>
            <Cell $c={p.on && C.text}>{p.k}</Cell>
            <Cell $c={p.on && C.text}>{p.v}</Cell>
            <Cell $last />
          </Row>
        ))}
        <Row $h={41}>
          <CheckCell />
          <Cell>Key</Cell>
          <Cell>Value</Cell>
          <Cell $last>Description</Cell>
        </Row>
      </Table>
    </>
  );
}

function ResponsePane() {
  return (
    <Response>
      <SubTabs $h={40} $l={10} $r={15}>
        <SubSlot $w={56.5}>
          <SubTab $active>Body</SubTab>
        </SubSlot>
        <SubSlot $w={77}>
          <SubTab>Cookies</SubTab>
        </SubSlot>
        <SubSlot $w={104.5}>
          <SubTab $gap={5}>
            Headers <Count $c={C.green}>(7)</Count>
          </SubTab>
        </SubSlot>
        <SubSlot $w={90}>
          <SubTab>Test Results</SubTab>
        </SubSlot>
        <Spacer />
        <Meta $w={34}>
          <Svg $w={18} $h={18} $box="0 0 18 18" $s={1.1}>
            <circle cx="9" cy="9" r="8.300" />
            <ellipse cx="9" cy="9" rx="4" ry="8.300" />
            <path d="M1.500 5.500c4 1.500 11 1.500 15 0M1.500 12.500c4-1.500 11-1.500 15 0" />
          </Svg>
        </Meta>
        <Meta $w={116}>
          Status: <Count>200 OK</Count>
        </Meta>
        <Meta $w={103}>
          Time: <Count>50.97 s</Count>
        </Meta>
        <Meta $w={111}>
          Size: <Count>22.81 MB</Count>
        </Meta>
        <Link>
          <VLine $h={25} $l={0} $r={3} />
          Save Response <Chevron c={C.link} />
        </Link>
      </SubTabs>
      <Viewer>
        <Canvas>
          <Page>
            <H1>数据结构与算法</H1>
            <H2>什么是数据结构？什么是算法?</H2>
            <P>大部分数据结构和算法教材，在开篇都会给这两个概念下一个明确的定义。</P>
            <P>
              {"但是，这些定义都很抽象，对理解这两个概念并没有实质性的帮助，反倒会让你陷入死抠定义的误区。毕竟，我们\n现在学习，并不是为了考试，所以，概念背得再牢，不会用也就没什么用。"}
            </P>
            <P>
              {"虽然我们说没必要深挖严格的定义，但是这并不等于不需要理解概念。 下面我就从广义和狭义两个层面，来帮你理\n解数据结构与算法这两个概念。"}
            </P>
            <P $b>从广义上讲，数据结构就是指一组数据的存储结构。算法就是操作数据的一组方法。</P>
          </Page>
        </Canvas>
        <RespTrack>
          <SideThumb $h={15} />
        </RespTrack>
      </Viewer>
    </Response>
  );
}

function Status() {
  return (
    <StatusBar>
      <StatusItem $w={27}>
        <Svg $w={15} $h={14} $box="0 0 15 14" $s={1.3}>
          <path d="M1 1h13v12H1zM8 1v12M3 4h3M3 7h3M3 10h3" />
        </Svg>
      </StatusItem>
      <StatusItem $w={80}>
        <Svg $w={15} $h={17} $box="0 1 16 18" $s={1.1}>
          <circle cx="8" cy="8.800" r="7.300" />
          <path d="m4.500 8.800 2.500 2.500 4.500-4.500" />
        </Svg>
        Online
      </StatusItem>
      <StatusItem $w={163}>
        <SearchIcon w={15} />
        Find and Replace
      </StatusItem>
      <StatusItem $w={100}>
        <Svg $w={14} $s={1.4}>
          <path d="M1 1h14v14H1zM1 2.500h14M4 7l2.500 2L4 11M8 12h4" />
        </Svg>
        Console
      </StatusItem>
      <Spacer />
      <StatusItem $w={92}>
        <Svg $w={15} $s={1.2}>
          <path d="M8 1a7 7 0 1 0 7 7.500c-1 .5-2.200.3-2.800-.800-1.700.8-3.400-.2-3.200-2C7.500 5.500 6.500 4 7 2.800 7.200 2 7.500 1.500 8 1ZM5 5.500v1.200M8 8v1.200M4.500 9.500v1.200M8 12v1.200M11.500 10.500v1.200" />
        </Svg>
        Cookies
      </StatusItem>
      <StatusItem $w={153}>
        <Svg $w={15} $s={1.2}>
          <path d="M4 5c-2.500 3-2.500 6 0 7.500s5 1 7-1ZM4 5l7 6.500M7 8l2.500-2.500M3.500 12.500 2 15.500h4M9 3.500c2 0 3.500 1.500 3.500 3.500M9.500.8c3.500 0 5.700 2.200 5.700 5.700" />
        </Svg>
        Capture requests
      </StatusItem>
      <StatusItem $w={107}>
        <Svg $w={15} $s={1.2}>
          <path d="M.5 5.500 8 2l7.500 3.500L8 9ZM3 7v5c3 2.500 7 2.500 10 0V7M1 6v5" />
        </Svg>
        Bootcamp
      </StatusItem>
      <StatusItem $w={86}>
        <Svg $w={13} $s={1.4}>
          <rect x="1" y="1" width="14" height="14" rx="1.500" />
          <path d="m6 5 5 3-5 3z" fill={C.mid} />
        </Svg>
        Runner
      </StatusItem>
      <StatusItem $w={75}>
        <Svg $w={13} $h={15} $box="0 0 13 15" $s={1.2}>
          <path d="M0 3h13M4 3V1h5v2M2 3v11h9V3M4.500 5v7M6.500 5v7M8.500 5v7" />
        </Svg>
        Trash
      </StatusItem>
      <StatusItem $w={35}>
        <Svg $w={15} $s={1.3}>
          <path d="M1 1h14v14H1zM8 1v14" />
          <path d="M3.500 7h2v2h-2zM10.500 7h2v2h-2z" fill={C.mid} />
        </Svg>
      </StatusItem>
      <StatusItem $w={25}>
        <Svg $w={15} $s={1.2}>
          <circle cx="8" cy="8" r="7.300" />
          <path d="M5.700 6.300c0-3 4.600-3 4.600-.3C10.300 8 8 7.800 8 10M8 11.300v1.200" />
        </Svg>
      </StatusItem>
    </StatusBar>
  );
}

function Desktop() {
  return (
    <TaskBar>
      <Apps>
        {apps.map((a, i) => (
          <AppTile key={i} $on={a.on}>
            <TaskSvg>{a.icon}</TaskSvg>
            {a.mark && <Mark $on={a.on} />}
          </AppTile>
        ))}
      </Apps>
      <Tray>
        <Slot $w={30} $at="flex-start">
          <Svg $w={16} $c="#111" $s={1.3}>
            <path d="M.5 12 8 4.500 15.500 12" />
          </Svg>
        </Slot>
        <Slot $w={33} $at="flex-start">
          <Svg $w={16} $h={20} $box="0 0 16 20" $s={0.01}>
            <path d="M8 0c4 0 6 3 6 7 2 3 2.500 6 1.500 7l-1-1c0 4-3 6-6.500 6S1.500 17 1.500 13l-1 1C-.5 13 0 10 2 7c0-4 2-7 6-7Z" fill="#111" />
            <ellipse cx="8" cy="14" rx="4.500" ry="4.500" fill="#fff" />
            <ellipse cx="6" cy="4.500" rx="1.200" ry="1.800" fill="#fff" />
            <ellipse cx="10" cy="4.500" rx="1.200" ry="1.800" fill="#fff" />
            <ellipse cx="8" cy="7.500" rx="3" ry="1" fill="#f6a81c" />
            <path d="M2 8.500c4 2 8 2 12 0v2.500c-3 1-5 1.200-7 1v3H4v-4l-2-.5z" fill="#e3202a" />
            <path d="M1.500 19c1-2 4-2 6 0zM8.500 19c2-2 5-2 6 0z" fill="#f6a81c" />
          </Svg>
        </Slot>
        <Ime $w={49}>英</Ime>
        <Ime $w={46}>拼</Ime>
        <Slot $w={30} $at="flex-start">
          <Svg $w={20} $h={17} $box="0 0 20 17" $c="#111" $s={1.4}>
            <path d="M.7 6.500c5-5.800 13.600-5.800 18.600 0M3.700 9.500c3.500-4 9.100-4 12.600 0M6.700 12.300c2-2 4.600-2 6.600 0" />
            <circle cx="10" cy="14.800" r="1.200" fill="#111" />
          </Svg>
        </Slot>
        <Slot $w={30} $at="flex-start">
          <Svg $w={19} $h={16} $box="0 0 19 16" $c="#111" $s={1.2}>
            <path d="M1 5.500h3l4-4v13l-4-4H1ZM10.500 5c1.500 2 1.500 4 0 6M13 3c2.700 3 2.700 7 0 10" />
            <path d="M15.500 1c3.500 4.500 3.500 9.500 0 14" stroke="#aab4c0" />
          </Svg>
        </Slot>
        <Slot $w={22} $at="flex-start">
          <Svg $w={21} $h={17} $box="0 0 21 17" $c="#111" $s={1.4}>
            <path d="M10 3.500h7a1.500 1.500 0 0 1 1.500 1.500v8a1.500 1.500 0 0 1-1.500 1.500H7V10M18.500 7.500h1.700v3h-1.700M4 7v8h3" />
            <path d="M10 6h6.500v6.500H9V9z" fill="#111" stroke="none" />
            <path d="M.5 3h7v2.500L5.500 8h-3l-2-2.500zM2 0v3M6 0v3" fill="#111" />
          </Svg>
        </Slot>
        <Clock>
          10:54
          <br />
          2022/8/1
        </Clock>
      </Tray>
    </TaskBar>
  );
}

export default function App() {
  return (
    <Screen>
      <Global />
      <TopSection />
      <Frame>
        <Sidebar />
        <RightPane>
          <Tabs />
          <Work>
            <Builder>
              <Request />
              <ResponsePane />
            </Builder>
            <ToolStrip>
              <Svg $w={20} $box="0 0 20 20" $s={1.3}>
                <path d="M5.500 5 1 10l4.500 5M14.500 5l4.500 5-4.500 5M11.800 2.500 8.200 17.500" />
              </Svg>
              <Svg $w={20} $box="0 0 20 20" $s={1.3}>
                <path d="M7.500 15.500c0-2-3-4-3-8a5.500 5.500 0 0 1 11 0c0 4-3 6-3 8ZM7.500 17.500h5M8 19.300h4M11 4 8.500 8h3L9 12M0 8h2M18 8h2M1 3l2 1M19 3l-2 1M1 13l2-1M19 13l-2-1" />
              </Svg>
            </ToolStrip>
          </Work>
        </RightPane>
      </Frame>
      <Status />
      <Desktop />
    </Screen>
  );
}
